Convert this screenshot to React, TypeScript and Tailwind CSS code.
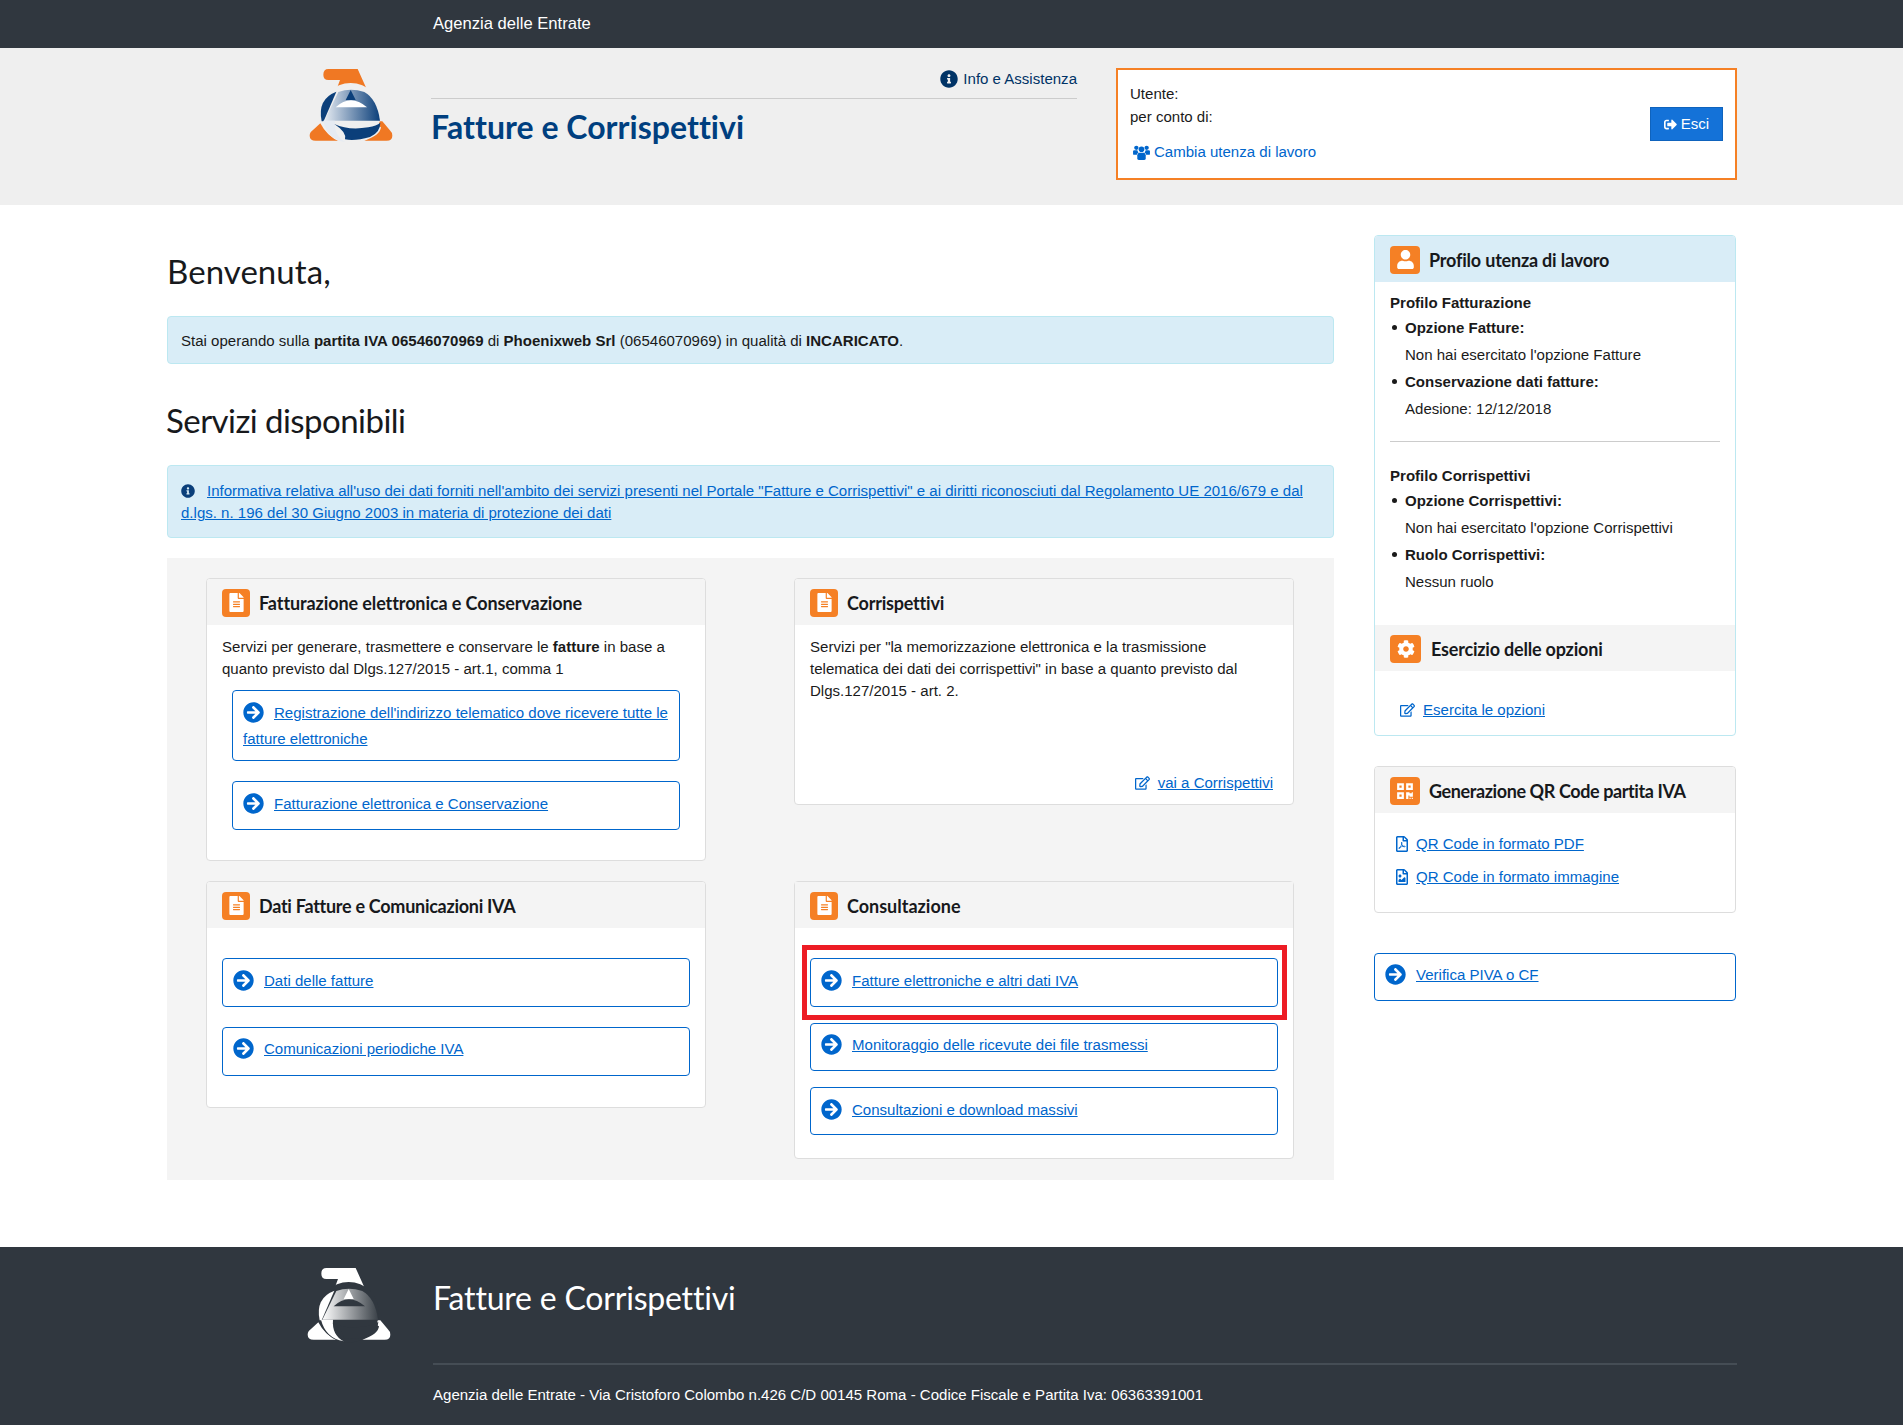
import React from 'react';
import {
  FaArrowCircleRight,
  FaCog,
  FaFileAlt,
  FaInfoCircle,
  FaQrcode,
  FaRegEdit,
  FaRegFileImage,
  FaRegFilePdf,
  FaSignOutAlt,
  FaUser,
} from 'react-icons/fa';

const titleFont = "font-['Lato','Noto_Sans',sans-serif]";

const Logo = ({ footer = false }: { footer?: boolean }) => {
  const id = footer ? 'logoFooter' : 'logoHeader';
  const shell = footer ? '#ffffff' : '#f07823';
  const dark = footer ? '#30373f' : '#0b3f7a';
  const light = footer ? '#ffffff' : '#e6ebf2';
  const ring = footer ? '#30373f' : '#efefef';
  return (
    <svg viewBox="0 0 276 246" className="w-[92px] h-[82px] shrink-0 block">
      <defs>
        <linearGradient id={id} x1="0" x2="1" y1="0" y2="0">
          <stop offset="0" stopColor={light} />
          <stop offset="1" stopColor={footer ? '#3a4148' : '#0b3f7a'} />
        </linearGradient>
      </defs>
      <path d="M70 15H158L185 75Q140 58 95 75L105 48H70Q55 48 55 32Q55 15 70 15Z" fill={shell} />
      <path d="M46 178L24 198Q14 205 14 215Q14 230 32 230H100Q65 215 46 178Z" fill={shell} />
      <path d="M190 172H232L254 198Q262 205 262 215Q262 230 245 230H178Q225 215 228 190Z" fill={shell} />
      <circle cx="137" cy="148" r="91" fill={ring} />
      <path d="M50 172Q36 105 94 83L56 172Z" fill={footer ? '#ffffff' : dark} />
      <path d="M100 84Q137 70 178 84Q216 105 225 170H58Z" fill={`url(#${id})`} />
      <path d="M92 130Q137 88 186 130Z" fill={footer ? '#30373f' : '#ffffff'} />
      <path d="M137 78L122 108H152Z" fill={footer ? '#ffffff' : dark} />
      <path d="M54 170H90Q86 215 122 235Q68 225 54 170Z" fill={light} />
      <path d="M88 180Q130 200 190 190Q215 185 226 176Q226 205 195 219Q150 232 120 226Q126 205 88 180Z" fill={footer ? '#30373f' : dark} />
    </svg>
  );
};

const UsersIcon = () => (
  <svg viewBox="0 0 18 16" className="w-[17px] h-[15px]" fill="currentColor">
    <circle cx="9" cy="4.5" r="3" />
    <circle cx="3.5" cy="3" r="2.3" />
    <circle cx="14.5" cy="3" r="2.3" />
    <path d="M0 6.5Q0 5.5 1.5 5.5H4.6Q4.9 7 5.8 8Q4.4 8.6 4 10.5H1Q0 10.5 0 9.5Z" />
    <path d="M18 6.5Q18 5.5 16.5 5.5H13.4Q13.1 7 12.2 8Q13.6 8.6 14 10.5H17Q18 10.5 18 9.5Z" />
    <path d="M6.5 8.2H11.5Q13.5 8.5 13.5 11V14Q13.5 16 11.5 16H6.5Q4.5 16 4.5 14V11Q4.5 8.5 6.5 8.2Z" />
  </svg>
);

const IconBox = ({ children, width = 'w-[28px]' }: { children: React.ReactNode; width?: string }) => (
  <span className={`${width} h-[28px] shrink-0 rounded-[4px] bg-[#f58025] text-white flex items-center justify-center`}>
    {children}
  </span>
);

const ServiceLink = ({ label, className = '' }: { label: string; className?: string }) => (
  <div className={`border border-[#0066cc] rounded-[4px] bg-white pl-[10px] pr-[5px] leading-[26px] ${className}`}>
    <FaArrowCircleRight className="inline text-[#0066cc] w-[21px] h-[21px] mr-[10px] align-[-5px]" />
    <a href="#" className="text-[#0066cc] underline">
      {label}
    </a>
  </div>
);

const CardHeader = ({
  title,
  bg = 'bg-[#f4f4f4]',
  icon,
  gap = 'gap-[9px]',
  tracking = 'tracking-[-0.2px]',
}: {
  title: string;
  bg?: string;
  icon: React.ReactNode;
  gap?: string;
  tracking?: string;
}) => (
  <div className={`${bg} h-[46px] flex items-center pl-[15px] pt-[1px] ${gap}`}>
    {icon}
    <h3 className={`${titleFont} font-bold text-[18px] text-[#17191c] pt-[1px] ${tracking}`}>{title}</h3>
  </div>
);

const fileIcon = (
  <IconBox>
    <FaFileAlt className="w-[15px] h-[19px]" />
  </IconBox>
);

const Card = ({
  title,
  tracking,
  className = '',
  children,
}: {
  title: string;
  tracking?: string;
  className?: string;
  children: React.ReactNode;
}) => (
  <section className={`border border-[#dddddd] rounded-[4px] bg-white flex flex-col overflow-hidden ${className}`}>
    <div className="h-[47px]">
      <CardHeader title={title} icon={fileIcon} tracking={tracking} />
    </div>
    {children}
  </section>
);

const ProfileItem = ({ label, value }: { label: string; value: string }) => (
  <li className="leading-[27px] pl-[15px] relative before:absolute before:left-[2px] before:top-[11px] before:w-[5px] before:h-[5px] before:rounded-full before:bg-[#1a1a1a]">
    <b className="font-bold">{label}</b>
    <div>{value}</div>
  </li>
);

export default function App() {
  return (
    <div className="font-['Liberation_Sans',Arial,sans-serif] text-[15.04px] text-[#1a1a1a] bg-white">
      <div className="h-[48px] bg-[#30373f] text-white text-[16.6px] flex items-center pl-[433px] pt-[1px]">Agenzia delle Entrate</div>

      <header className="h-[157px] bg-[#efefef] flex pl-[305px] pr-[166px]">
        <div className="mt-[16px]">
          <Logo />
        </div>
        <div className="w-[646px] ml-[34px]">
          <div className="h-[51px] border-b border-[#cccccc] flex justify-end pt-[20px]">
            <a href="#" className="text-[#003366] leading-[22px] flex items-center gap-[5px] h-[22px]">
              <FaInfoCircle className="w-[18px] h-[18px]" />
              Info e Assistenza
            </a>
          </div>
          <h1 className={`${titleFont} font-bold text-[#003f7f] text-[32px] leading-[40px] mt-[8px] tracking-[0.03px]`}>Fatture e Corrispettivi</h1>
        </div>
        <div className="ml-[39px] mt-[20px] w-[621px] h-[112px] border-2 border-[#f58025] bg-white flex items-center justify-between pl-[12px] pr-[12px]">
          <div className="text-[#1a1a1a] -mt-[2px]">
            <div className="leading-[22px]">Utente:</div>
            <div className="leading-[23px]">per conto di:</div>
            <a href="#" className="mt-[14px] h-[22px] text-[#0066cc] flex items-center gap-[4px] pl-[3px]">
              <UsersIcon />
              Cambia utenza di lavoro
            </a>
          </div>
          <button className="w-[73px] h-[34px] bg-[#1472d8] border border-[#0f63bd] text-white flex items-center justify-center gap-[4px]">
            <FaSignOutAlt className="w-[13px] h-[13px]" />
            Esci
          </button>
        </div>
      </header>

      <main className="flex justify-between pl-[167px] pr-[167px] pt-[30px]">
        <div className="w-[1167px]">
          <h1 className={`${titleFont} text-[33px] leading-[40px] mt-[16px] text-[#17191c] font-normal tracking-[0.06px]`}>Benvenuta,</h1>
          <div className="mt-[25px] h-[48px] bg-[#d9edf7] border border-[#bce8f1] rounded-[4px] flex items-center pl-[13px] pt-[2px]">
            <p>
              Stai operando sulla <b>partita IVA 06546070969</b> di <b>Phoenixweb Srl</b> (06546070969) in qualità di <b>INCARICATO</b>.
            </p>
          </div>
          <h2 className={`${titleFont} text-[33px] leading-[40px] mt-[36px] -ml-[1px] text-[#17191c] font-normal tracking-[-0.55px]`}>Servizi disponibili</h2>
          <div className="mt-[25px] h-[73px] bg-[#d9edf7] border border-[#bce8f1] rounded-[4px] pl-[13px] pr-[20px] pt-[14px] leading-[22px]">
            <FaInfoCircle className="inline w-[14px] h-[14px] text-[#0b3f7a] mr-[12px] align-[-2px]" />
            <a href="#" className="text-[#0066cc] underline">
              Informativa relativa all'uso dei dati forniti nell'ambito dei servizi presenti nel Portale "Fatture e Corrispettivi" e ai diritti riconosciuti dal Regolamento UE 2016/679 e dal d.lgs. n. 196 del 30 Giugno 2003 in materia di protezione dei dati
            </a>
          </div>

          <div className="mt-[20px] bg-[#f4f4f4] pt-[20px] pb-[21px] pl-[39px] pr-[40px] grid grid-cols-[500px_500px] justify-between gap-y-[20px] items-start">
            <Card title="Fatturazione elettronica e Conservazione" tracking="tracking-[-0.1px]" className="h-[283px]">
              <div className="px-[15px] pt-[10px] leading-[22px]">
                <p>
                  Servizi per generare, trasmettere e conservare le <b>fatture</b> in base a quanto previsto dal Dlgs.127/2015 - art.1, comma 1
                </p>
                <div className="mx-[10px] mt-[10px] flex flex-col gap-[20px]">
                  <ServiceLink className="h-[71px] pt-[9px]" label="Registrazione dell'indirizzo telematico dove ricevere tutte le fatture elettroniche" />
                  <ServiceLink className="h-[49px] pt-[9px]" label="Fatturazione elettronica e Conservazione" />
                </div>
              </div>
            </Card>

            <Card title="Corrispettivi" className="h-[227px]">
              <div className="flex-1 flex flex-col pl-[15px] pr-[15px] pt-[10px] pb-[10px] leading-[22px]">
                <p className="pr-[25px]">Servizi per "la memorizzazione elettronica e la trasmissione telematica dei dati dei corrispettivi" in base a quanto previsto dal Dlgs.127/2015 - art. 2.</p>
                <div className="mt-auto flex justify-end items-center gap-[8px] pr-[5px] text-[#0066cc]">
                  <FaRegEdit className="w-[15px] h-[14px]" />
                  <a href="#" className="underline">
                    vai a Corrispettivi
                  </a>
                </div>
              </div>
            </Card>

            <Card title="Dati Fatture e Comunicazioni IVA" tracking="tracking-[-0.28px]" className="h-[227px]">
              <div className="px-[15px] pt-[29px] flex flex-col gap-[20px]">
                <ServiceLink className="h-[49px] pt-[9px]" label="Dati delle fatture" />
                <ServiceLink className="h-[49px] pt-[8px]" label="Comunicazioni periodiche IVA" />
              </div>
            </Card>

            <Card title="Consultazione" tracking="tracking-[0px]" className="h-[278px] relative overflow-visible">
              <div className="px-[15px] pt-[29px] flex flex-col">
                <ServiceLink className="h-[49px] pt-[9px]" label="Fatture elettroniche e altri dati IVA" />
                <ServiceLink className="h-[48px] mt-[16px] pt-[8px]" label="Monitoraggio delle ricevute dei file trasmessi" />
                <ServiceLink className="h-[48px] mt-[16px] pt-[9px]" label="Consultazioni e download massivi" />
              </div>
              <div className="absolute left-[7px] top-[63px] w-[485px] h-[75px] border-[5px] border-[#ed1c24] pointer-events-none" />
            </Card>
          </div>
        </div>

        <aside className="w-[362px]">
          <section className="h-[501px] border border-[#bce8f1] rounded-[4px] overflow-hidden">
            <CardHeader
              title="Profilo utenza di lavoro"
              bg="bg-[#d9edf7]"
              icon={
                <IconBox width="w-[30px]">
                  <FaUser className="w-[17px] h-[19px]" />
                </IconBox>
              }
            />
            <div className="px-[15px] pt-[7px]">
              <div className="font-bold leading-[27px] -mb-[2px]">Profilo Fatturazione</div>
              <ul>
                <ProfileItem label="Opzione Fatture:" value="Non hai esercitato l'opzione Fatture" />
                <ProfileItem label="Conservazione dati fatture:" value="Adesione: 12/12/2018" />
              </ul>
              <hr className="border-[#cccccc] mt-[19px] mb-[20px]" />
              <div className="font-bold leading-[27px] -mb-[2px]">Profilo Corrispettivi</div>
              <ul>
                <ProfileItem label="Opzione Corrispettivi:" value="Non hai esercitato l'opzione Corrispettivi" />
                <ProfileItem label="Ruolo Corrispettivi:" value="Nessun ruolo" />
              </ul>
            </div>
            <div className="mt-[30px]">
              <CardHeader
                title="Esercizio delle opzioni"
                gap="gap-[10px]"
                icon={
                  <IconBox width="w-[31px]">
                    <FaCog className="w-[18px] h-[18px]" />
                  </IconBox>
                }
              />
            </div>
            <div className="pl-[25px] pt-[28px] flex items-center gap-[8px] text-[#0066cc] leading-[22px]">
              <FaRegEdit className="w-[15px] h-[14px]" />
              <a href="#" className="underline">
                Esercita le opzioni
              </a>
            </div>
          </section>

          <section className="mt-[30px] h-[147px] border border-[#dddddd] rounded-[4px] overflow-hidden">
            <CardHeader
              title="Generazione QR Code partita IVA"
              tracking="tracking-[-0.4px]"
              icon={
                <IconBox width="w-[30px]">
                  <FaQrcode className="w-[18px] h-[18px]" />
                </IconBox>
              }
            />
            <div className="pl-[20px] pt-[20px] flex flex-col gap-[11px] text-[#0066cc] leading-[22px]">
              <div className="flex items-center gap-[7px]">
                <FaRegFilePdf className="w-[14px] h-[16px]" />
                <a href="#" className="underline">
                  QR Code in formato PDF
                </a>
              </div>
              <div className="flex items-center gap-[7px]">
                <FaRegFileImage className="w-[14px] h-[16px]" />
                <a href="#" className="underline">
                  QR Code in formato immagine
                </a>
              </div>
            </div>
          </section>

          <ServiceLink className="mt-[40px] h-[48px] pt-[8px]" label="Verifica PIVA o CF" />
        </aside>
      </main>

      <footer className="mt-[67px] h-[178px] bg-[#30373f] text-white">
        <div className="h-[116px] flex pl-[303px]">
          <div className="mt-[16px]">
            <Logo footer />
          </div>
          <h2 className={`${titleFont} text-[32px] leading-[40px] ml-[38px] mt-[31px] font-normal tracking-[-0.2px]`}>Fatture e Corrispettivi</h2>
        </div>
        <div className="ml-[433px] mr-[166px] border-t-2 border-[#454d55] pt-[19px] leading-[22px]">
          Agenzia delle Entrate - Via Cristoforo Colombo n.426 C/D 00145 Roma - Codice Fiscale e Partita Iva: 06363391001
        </div>
      </footer>
    </div>
  );
}
